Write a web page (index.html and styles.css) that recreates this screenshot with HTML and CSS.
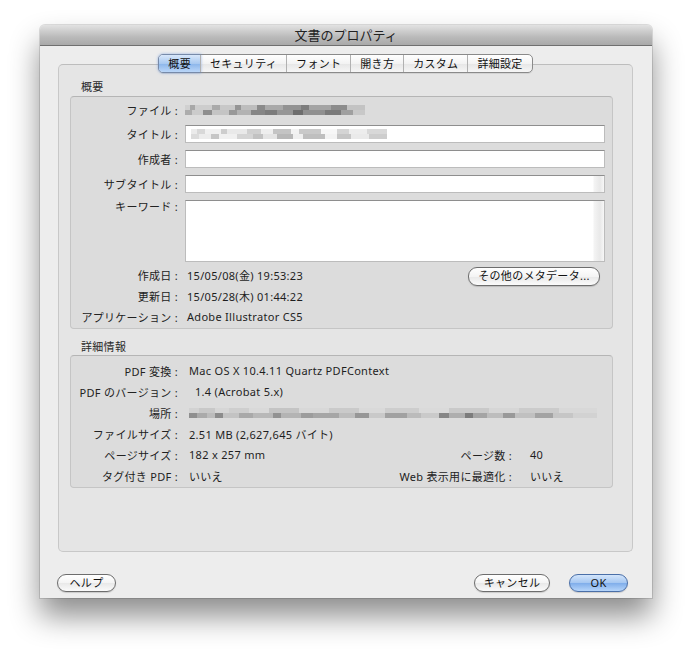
FILE: index.html
```html
<!DOCTYPE html>
<html lang="ja">
<head>
    <meta charset="UTF-8">
    <title>文書のプロパティ</title>
    <link rel="stylesheet" href="styles.css">
</head>
<body>
    <div class="window">
        <div class="titlebar">文書のプロパティ</div>
        <div class="window-body">
            <div class="tabs">
                <span class="tab active">概要</span>
                <span class="tab">セキュリティ</span>
                <span class="tab">フォント</span>
                <span class="tab">開き方</span>
                <span class="tab">カスタム</span>
                <span class="tab">詳細設定</span>
            </div>

            <div class="panel">
                <div class="section-label">概要</div>
                <div class="group group-desc">
                    <div class="row row-text">
                        <span class="label">ファイル :</span>
                        <span class="blur blur-file"></span>
                    </div>
                    <div class="row row-field">
                        <span class="label">タイトル :</span>
                        <div class="field"><span class="blur blur-title"></span></div>
                    </div>
                    <div class="row row-field">
                        <span class="label">作成者 :</span>
                        <div class="field"></div>
                    </div>
                    <div class="row row-field">
                        <span class="label">サブタイトル :</span>
                        <div class="field field-scroll"></div>
                    </div>
                    <div class="row row-area">
                        <span class="label">キーワード :</span>
                        <div class="field field-scroll field-area"></div>
                    </div>
                    <div class="row row-info">
                        <span class="label">作成日 :</span>
                        <span class="value">15/05/08(金) 19:53:23</span>
                        <button class="pill meta-btn">その他のメタデータ...</button>
                    </div>
                    <div class="row row-info">
                        <span class="label">更新日 :</span>
                        <span class="value">15/05/28(木) 01:44:22</span>
                    </div>
                    <div class="row row-info">
                        <span class="label">アプリケーション :</span>
                        <span class="value">Adobe Illustrator CS5</span>
                    </div>
                </div>

                <div class="section-label second">詳細情報</div>
                <div class="group group-adv">
                    <div class="row row-info">
                        <span class="label">PDF 変換 :</span>
                        <span class="value">Mac OS X 10.4.11 Quartz PDFContext</span>
                    </div>
                    <div class="row row-info">
                        <span class="label">PDF のバージョン :</span>
                        <span class="value shifted">1.4 (Acrobat 5.x)</span>
                    </div>
                    <div class="row row-info">
                        <span class="label">場所 :</span>
                        <span class="blur blur-path"></span>
                    </div>
                    <div class="row row-info">
                        <span class="label">ファイルサイズ :</span>
                        <span class="value">2.51 MB (2,627,645 バイト)</span>
                    </div>
                    <div class="row row-info">
                        <span class="label">ページサイズ :</span>
                        <span class="value">182 x 257 mm</span>
                        <span class="label-right">ページ数 :</span>
                        <span class="value-right">40</span>
                    </div>
                    <div class="row row-info">
                        <span class="label">タグ付き PDF :</span>
                        <span class="value">いいえ</span>
                        <span class="label-right">Web 表示用に最適化 :</span>
                        <span class="value-right">いいえ</span>
                    </div>
                </div>
            </div>

            <div class="buttons">
                <button class="pill help-btn">ヘルプ</button>
                <button class="pill cancel-btn">キャンセル</button>
                <button class="pill ok-btn">OK</button>
            </div>
        </div>
    </div>
</body>
</html>
```

FILE: styles.css
```css
html {
    background-color: #ffffff;
}

body {
    box-sizing: border-box;
    min-height: 654px;
    margin: 0;
    padding: 25px 0 56px 40px;
    background-color: #ffffff;
    font-family: "Noto Sans", "Noto Sans CJK JP", sans-serif;
    font-size: 11px;
    letter-spacing: 0.3px;
    color: #1e1e1e;
}

.window {
    width: 612px;
    height: 573px;
    background-color: #ededed;
    border-radius: 5px 5px 0 0;
    box-shadow: 0 18px 30px rgba(0, 0, 0, 0.45), 0 0 0 1px rgba(0, 0, 0, 0.12);
}

.titlebar {
    height: 20px;
    line-height: 20px;
    text-align: center;
    font-size: 13px;
    letter-spacing: 0;
    color: #222;
    border-radius: 5px 5px 0 0;
    background: linear-gradient(#e2e2e2, #bababa 60%, #a9a9a9);
    border-bottom: 1px solid #6f6f6f;
}

.window-body {
    padding: 8px 19px 0 18px;
}

/* segmented tab control */
.tabs {
    position: relative;
    z-index: 1;
    display: flex;
    width: fit-content;
    height: 17px;
    margin: 0 auto -9px;
    border: 1px solid #8a8a8a;
    border-radius: 5px;
    background: linear-gradient(#ffffff, #f3f3f3 50%, #e6e6e6 51%, #f6f6f6);
    box-shadow: 0 1px 0 rgba(0, 0, 0, 0.08);
}

.tab {
    padding: 0 9px;
    line-height: 17px;
    border-left: 1px solid #b1b1b1;
    color: #111;
}

.tab:first-child {
    border-left: none;
}

.tab.active {
    border-radius: 4px 0 0 4px;
    background: linear-gradient(#d8e7fa, #a9c9f0 50%, #8bb5ea 51%, #bad6f8);
    box-shadow: 0 0 3px 1px rgba(90, 140, 220, 0.6);
}

.panel {
    box-sizing: border-box;
    height: 488px;
    background-color: #e5e5e5;
    border: 1px solid #c8c8c8;
    border-top-color: #bdbdbd;
    border-radius: 5px;
    padding-top: 15px;
}

.section-label {
    margin-left: 22px;
    line-height: 14px;
    color: #2a2a2a;
    margin-bottom: 2px;
}

.section-label.second {
    margin-top: 11px;
    margin-bottom: 1px;
}

.group {
    margin: 0 19px 0 11px;
    background-color: #dcdcdc;
    border: 1px solid #c5c5c5;
    border-top-color: #b5b5b5;
    border-radius: 4px;
}

.group-desc {
    padding: 4px 0 0;
    height: 227px;
}

.group-adv {
    padding: 4px 0 0;
    height: 127px;
}

.row {
    display: flex;
    align-items: center;
}

.label {
    flex-shrink: 0;
    width: 107px;
    text-align: right;
    white-space: nowrap;
    color: #222;
}

.row-text {
    height: 18px;
}

.row-field {
    height: 18px;
    margin-top: 6px;
}

.row-field + .row-field {
    margin-top: 7px;
}

.row-area {
    align-items: flex-start;
    height: 62px;
    margin-top: 7px;
}

.row-area .label {
    line-height: 13px;
}

.row-info {
    height: 21px;
}

.row-area + .row-info {
    margin-top: 2px;
}

.group-desc .value {
    margin-left: 9px;
}

.group-adv .value {
    margin-left: 11px;
}

.group-adv .value.shifted {
    margin-left: 17px;
}

.field {
    box-sizing: border-box;
    display: flex;
    align-items: center;
    width: 420px;
    height: 18px;
    margin-left: 7px;
    background-color: #ffffff;
    border: 1px solid #bcbcbc;
    border-top-color: #8e8e8e;
}

.field-scroll {
    background: linear-gradient(90deg, #ffffff 0, #ffffff 407px, #f4f4f4 408px, #e9e9e9 414px, #f7f7f7 418px);
}

.field-area {
    height: 62px;
}

.label-right {
    margin-left: auto;
    white-space: nowrap;
    color: #222;
}

.value-right {
    width: 82px;
    margin-left: 18px;
}

/* pixelated blurred values */
.blur {
    display: inline-block;
    height: 10px;
}

.blur-file {
    width: 180px;
    margin-left: 7px;
    background:
        linear-gradient(90deg, #d0d0d0 0 5px, #a8a8a8 5px 10px, #cdcdcd 10px 27px, #aaaaaa 27px 35px, #c8c8c8 35px 50px, #959595 50px 56px, #bdbdbd 56px 72px, #8a8a8a 72px 80px, #a9a9a9 80px 98px, #939393 98px 116px, #7d7d7d 116px 124px, #a4a4a4 124px 146px, #8c8c8c 146px 162px, #c3c3c3 162px 180px) top / 100% 5px no-repeat,
        linear-gradient(90deg, #acacac 0 7px, #cbcbcb 7px 18px, #8e8e8e 18px 27px, #c4c4c4 27px 44px, #989898 44px 52px, #b2b2b2 52px 66px, #868686 66px 80px, #7c7c7c 80px 92px, #969696 92px 108px, #6e6e6e 108px 118px, #909090 118px 140px, #7a7a7a 140px 156px, #a0a0a0 156px 168px, #c8c8c8 168px 180px) bottom / 100% 5px no-repeat;
}

.blur-title {
    width: 196px;
    margin-left: 5px;
    background:
        linear-gradient(90deg, #ebebeb 0 6px, #d8d8d8 6px 14px, #f0f0f0 14px 30px, #cdcdcd 30px 36px, #e9e9e9 36px 56px, #d0d0d0 56px 70px, #eeeeee 70px 82px, #c4c4c4 82px 100px, #f2f2f2 100px 108px, #c9c9c9 108px 130px, #f7f7f7 130px 146px, #d4d4d4 146px 158px, #ededed 158px 176px, #d8d8d8 176px 196px) top / 100% 5px no-repeat,
        linear-gradient(90deg, #dcdcdc 0 8px, #ececec 8px 20px, #c6c6c6 20px 28px, #f0f0f0 28px 46px, #d5d5d5 46px 62px, #c2c2c2 62px 72px, #e4e4e4 72px 86px, #b8b8b8 86px 102px, #efefef 102px 112px, #bfbfbf 112px 134px, #f3f3f3 134px 146px, #c6c6c6 146px 160px, #eaeaea 160px 178px, #cdcdcd 178px 196px) bottom / 100% 5px no-repeat;
}

.blur-path {
    width: 408px;
    margin-left: 11px;
    background:
        linear-gradient(90deg, #d2d2d2 0 10px, #c8c8c8 10px 26px, #d6d6d6 26px 40px, #cecece 40px 60px, #d9d9d9 60px 80px, #c4c4c4 80px 110px, #d8d8d8 110px 140px, #cacaca 140px 170px, #d9d9d9 170px 196px, #cdcdcd 196px 230px, #dadada 230px 260px, #c9c9c9 260px 300px, #d6d6d6 300px 330px, #cbcbcb 330px 370px, #d8d8d8 370px 408px) top / 100% 5px no-repeat,
        linear-gradient(90deg, #8f8f8f 0 8px, #aaaaaa 8px 18px, #bcbcbc 18px 26px, #8c8c8c 26px 34px, #c3c3c3 34px 50px, #a9a9a9 50px 64px, #b8b8b8 64px 84px, #929292 84px 92px, #b4b4b4 92px 112px, #9c9c9c 112px 124px, #a6a6a6 124px 150px, #bdbdbd 150px 166px, #979797 166px 180px, #c9c9c9 180px 196px, #a1a1a1 196px 218px, #bbbbbb 218px 232px, #cacaca 232px 250px, #868686 250px 260px, #aeaeae 260px 276px, #7c7c7c 276px 284px, #a4a4a4 284px 298px, #bdbdbd 298px 314px, #999999 314px 326px, #c0c0c0 326px 346px, #a3a3a3 346px 364px, #c6c6c6 364px 384px, #d2d2d2 384px 408px) bottom / 100% 5px no-repeat;
}

/* aqua push buttons */
.pill {
    box-sizing: border-box;
    height: 18px;
    padding: 0;
    font-family: "Noto Sans", "Noto Sans CJK JP", sans-serif;
    font-size: 11px;
    letter-spacing: 0.3px;
    line-height: 16px;
    color: #111;
    background: linear-gradient(#ffffff, #f4f4f4 50%, #e8e8e8 51%, #fbfbfb);
    border: 1px solid #6d6d6d;
    border-radius: 9px;
    box-shadow: 0 1px 1px rgba(0, 0, 0, 0.15);
}

.meta-btn {
    width: 132px;
    height: 19px;
    margin: 3px 12px 0 auto;
}

.buttons {
    display: flex;
    margin-top: 22px;
    padding: 0 5px 0 0;
}

.help-btn {
    width: 59px;
    margin-left: -1px;
}

.cancel-btn {
    width: 76px;
    margin-left: auto;
}

.ok-btn {
    width: 59px;
    margin-left: 19px;
    border-color: #4a6fa8;
    background: linear-gradient(#d3e5fb, #a4c6f1 50%, #7fadea 51%, #b6d5fa);
}
```
